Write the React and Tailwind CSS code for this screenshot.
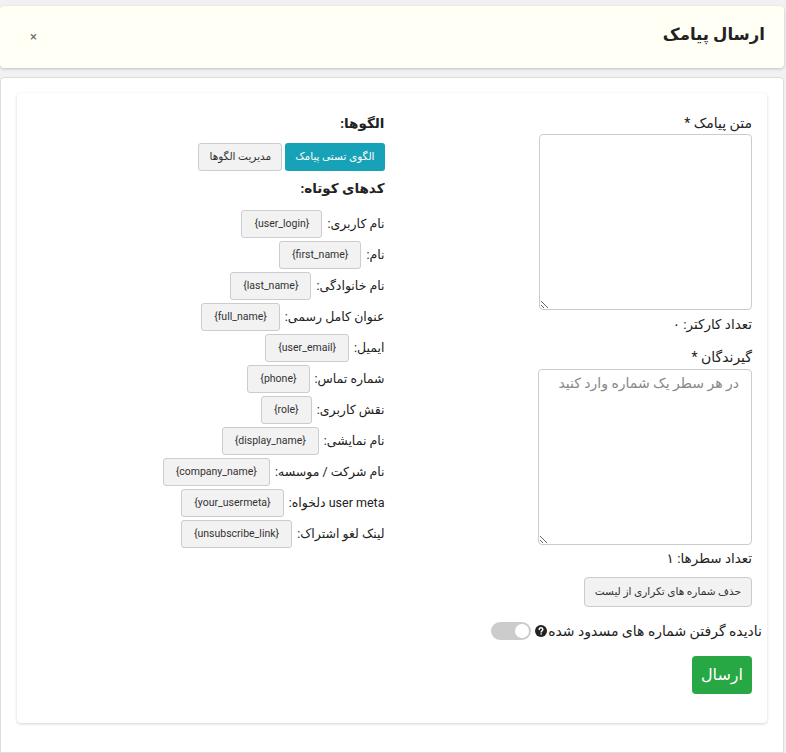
import { useState } from "react";

const shortcodes = [
  ["نام کاربری:", "{user_login}"],
  ["نام:", "{first_name}"],
  ["نام خانوادگی:", "{last_name}"],
  ["عنوان کامل رسمی:", "{full_name}"],
  ["ایمیل:", "{user_email}"],
  ["شماره تماس:", "{phone}"],
  ["نقش کاربری:", "{role}"],
  ["نام نمایشی:", "{display_name}"],
  ["نام شرکت / موسسه:", "{company_name}"],
  ["user meta دلخواه:", "{your_usermeta}"],
  ["لینک لغو اشتراک:", "{unsubscribe_link}"],
];

function App() {
  const [text, setText] = useState("");
  const [numbers, setNumbers] = useState("");
  const [ignore, setIgnore] = useState(false);

  return (
    <div
      dir="rtl"
      className="min-h-[753px] bg-[#f1f1f1] pt-[6px] text-[#222] font-['Roboto','DejaVu_Sans',sans-serif]"
    >
      <div className="mr-[2px] flex h-[62px] items-center justify-between rounded-[4px] bg-[#fffff6] pl-[30px] pr-[19px] shadow-[0_1px_3px_rgba(0,0,0,0.2)]">
        <h1 className="mt-[-3px] text-[16.5px] font-bold text-[#222]">ارسال پیامک</h1>
        <button className="text-[13px] text-[#666]">×</button>
      </div>

      <div className="mr-[2px] mt-[9px] min-h-[676px] rounded-t-[4px] border border-[#ddd] bg-white px-[16px] pt-[15px]">
        <div className="grid grid-cols-2 gap-[15px] rounded-[4px] bg-white px-[15px] pb-[29px] pt-[20px] shadow-[0_1px_3px_rgba(0,0,0,0.18)]">
          {/* right column: form */}
          <div className="flex flex-col items-start">
            <label className="text-[14px] leading-[20px]">متن پیامک *</label>
            <textarea
              value={text}
              onChange={(e) => setText(e.target.value)}
              className="mt-[1px] h-[176px] w-[213px] rounded-[4px] border border-[#ccc] p-[6px] text-[14px] outline-none"
            />
            <p className="mt-[4px] text-[13.5px] leading-[20px]">
              تعداد کارکتر: ۰
            </p>
            <label className="mt-[13px] text-[14px] leading-[20px]">
              گیرندگان *
            </label>
            <textarea
              value={numbers}
              onChange={(e) => setNumbers(e.target.value)}
              placeholder="در هر سطر یک شماره وارد کنید"
              className="mt-[2px] h-[176px] w-[214px] rounded-[4px] border border-[#ccc] px-[12px] py-[3px] text-[14px] outline-none placeholder:text-[#888]"
            />
            <p className="mt-[3px] text-[13.5px] leading-[20px]">
              تعداد سطرها: ۱
            </p>
            <button className="mt-[9px] h-[30px] rounded-[4px] border border-[#ccc] bg-[#f2f2f2] px-[10px] text-[10.5px] text-[#333]">
              حذف شماره های تکراری از لیست
            </button>
            <div className="-mr-[10px] mt-[14px] flex items-center gap-[1px]">
              <span className="text-[14px] leading-[20px]">
                نادیده گرفتن شماره های مسدود شده
              </span>
              <svg width="12" height="12" viewBox="0 0 16 16">
                <circle cx="8" cy="8" r="8" fill="#222" />
                <path
                  d="M5.6 6.1a2.4 2.4 0 0 1 4.8 0c0 1.6-2.2 1.7-2.2 3.3"
                  fill="none"
                  stroke="#fff"
                  strokeWidth="1.9"
                  strokeLinecap="round"
                />
                <circle cx="8.2" cy="12" r="1.1" fill="#fff" />
              </svg>
              <button
                onClick={() => setIgnore(!ignore)}
                className={
                  ignore
                    ? "mr-[3px] flex h-[18px] w-[40px] items-center justify-end rounded-full bg-[#28a745] px-[2px]"
                    : "mr-[3px] flex h-[18px] w-[40px] items-center justify-start rounded-full bg-[#ccc] px-[2px]"
                }
              >
                <span className="h-[14px] w-[14px] rounded-full bg-white" />
              </button>
            </div>
            <button className="mt-[15px] h-[38px] rounded-[4px] bg-[#28a745] px-[9px] text-[16px] text-white">
              ارسال
            </button>
          </div>

          {/* left column: templates & shortcodes */}
          <div className="flex flex-col items-start">
            <h3 className="text-[13.5px] font-bold leading-[20px]">الگوها:</h3>
            <div className="mt-[10px] flex gap-[3px]">
              <button className="h-[28px] rounded-[3px] bg-[#17a2b8] px-[10px] text-[10.5px] text-white">
                الگوی تستی پیامک
              </button>
              <button className="h-[28px] rounded-[3px] border border-[#ccc] bg-[#f2f2f2] px-[10px] text-[10.5px] text-[#333]">
                مدیریت الگوها
              </button>
            </div>
            <h3 className="mt-[7px] text-[13.5px] font-bold leading-[20px]">
              کدهای کوتاه:
            </h3>
            <div className="mt-[12px] flex flex-col gap-[3px]">
              {shortcodes.map(([label, code]) => (
                <div key={code} className="flex items-center gap-[5px]">
                  <span className="text-[12.5px] leading-[20px]">{label}</span>
                  <button
                    dir="ltr"
                    className="h-[28px] rounded-[3px] border border-[#ccc] bg-[#f2f2f2] px-[12px] text-[10.5px] text-[#333]"
                  >
                    {code}
                  </button>
                </div>
              ))}
            </div>
          </div>
        </div>
      </div>
    </div>
  );
}

export default App;
